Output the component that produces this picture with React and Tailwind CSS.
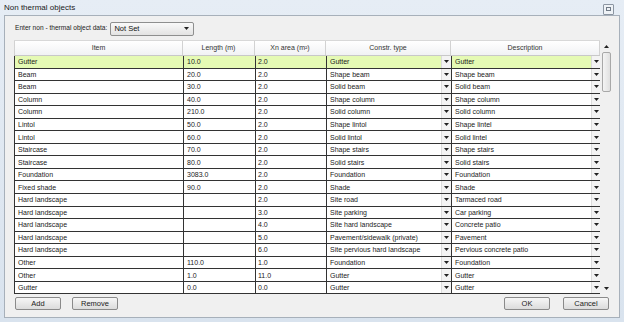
import React from "react";

const rows = [
  ["Gutter", "10.0", "2.0", "Gutter", "Gutter"],
  ["Beam", "20.0", "2.0", "Shape beam", "Shape beam"],
  ["Beam", "30.0", "2.0", "Solid beam", "Solid beam"],
  ["Column", "40.0", "2.0", "Shape column", "Shape column"],
  ["Column", "210.0", "2.0", "Solid column", "Solid column"],
  ["Lintol", "50.0", "2.0", "Shape lintol", "Shape lintel"],
  ["Lintol", "60.0", "2.0", "Solid lintol", "Solid lintel"],
  ["Staircase", "70.0", "2.0", "Shape stairs", "Shape stairs"],
  ["Staircase", "80.0", "2.0", "Solid stairs", "Solid stairs"],
  ["Foundation", "3083.0", "2.0", "Foundation", "Foundation"],
  ["Fixed shade", "90.0", "2.0", "Shade", "Shade"],
  ["Hard landscape", "", "2.0", "Site road", "Tarmaced road"],
  ["Hard landscape", "", "3.0", "Site parking", "Car parking"],
  ["Hard landscape", "", "4.0", "Site hard landscape", "Concrete patio"],
  ["Hard landscape", "", "5.0", "Pavement/sidewalk (private)", "Pavement"],
  ["Hard landscape", "", "6.0", "Site pervious hard landscape", "Pervious concrete patio"],
  ["Other", "110.0", "1.0", "Foundation", "Foundation"],
  ["Other", "1.0", "11.0", "Gutter", "Gutter"],
  ["Gutter", "0.0", "0.0", "Gutter", "Gutter"],
];

function Tri({ up }) {
  return (
    <svg width="5" height="3" viewBox="0 0 5 3" className="block">
      {up ? <path d="M0 3 L5 3 L2.5 0 Z" fill="#222" /> : <path d="M0 0 L5 0 L2.5 3 Z" fill="#222" />}
    </svg>
  );
}

function Btn({ children, w }) {
  return (
    <div
      className={`${w} h-[13px] flex items-center justify-center rounded-[2px] border border-[#8a8a8a] bg-gradient-to-b from-[#f6f6f6] to-[#dcdcdc] text-[7.5px] text-[#222]`}
    >
      {children}
    </div>
  );
}

export default function App() {
  return (
    <div
      className="w-[624px] h-[322px] overflow-hidden flex flex-col bg-gradient-to-b from-[#e6edf5] to-[#d9e3ee] text-[#111]"
      style={{ fontFamily: '"Liberation Sans", Arial, sans-serif' }}
    >
      {/* title bar */}
      <div className="h-[15px] shrink-0 flex items-center justify-between pl-[4px] pr-[10px]">
        <span className="text-[8px] leading-none text-[#1a1a1a]">Non thermal objects</span>
        <div className="w-[11px] h-[11px] mt-[3px] border border-[#8c96a2] rounded-[1px] bg-[#eef2f6] flex items-center justify-center">
          <div className="w-[5px] h-[4px] border border-[#707a86]" />
        </div>
      </div>

      {/* content */}
      <div className="mx-[4px] mb-[4px] flex-1 flex flex-col bg-[#f0f0f0] border border-[#a7b0ba] pl-[9px] pr-[6px]">
        {/* top row */}
        <div className="h-[24px] shrink-0 flex items-center gap-[3px] pl-[1px]">
          <span className="text-[6.6px] text-[#222]">Enter non - thermal object data:</span>
          <div className="w-[84px] h-[14px] mt-[1px] flex items-center justify-between border border-[#8e8f8f] rounded-[2px] bg-gradient-to-b from-[#f9f9f9] to-[#e3e3e3] pl-[3px] pr-[4px]">
            <span className="text-[7.5px]">Not Set</span>
            <Tri />
          </div>
        </div>

        {/* table + scrollbar */}
        <div className="flex shrink-0">
          <div className="w-[586px] flex flex-col">
            {/* header */}
            <div className="grid grid-cols-[169px_72px_71px_125px_149px] h-[16px] bg-gradient-to-b from-[#ffffff] to-[#f1f2f4] border-t border-[#d8d8d8] border-b border-b-[#c8c8c8]">
              {["Item", "Length (m)", "Xn area (m²)", "Constr. type", "Description"].map((h, i) => (
                <div
                  key={i}
                  className={`flex items-center justify-center text-[7px] text-[#333] border-r border-[#d2d2d2] ${i === 0 ? "border-l" : ""}`}
                >
                  {h}
                </div>
              ))}
            </div>
            {/* rows */}
            <div className="border-l border-[#333]">
              {rows.map((r, idx) => {
                const sel = idx === 0;
                const bg = sel ? "bg-[#e5fab4]" : "bg-white";
                return (
                  <div
                    key={idx}
                    className="grid grid-cols-[169px_72px_71px_125px_149px] h-[12.55px] border-b border-[#333] text-[7px] leading-none text-[#1a1a1a]"
                  >
                    <div className={`${bg} border-r border-[#333] flex items-center pl-[3px]`}>{r[0]}</div>
                    <div className={`${bg} border-r border-[#333] flex items-center pl-[3px]`}>{r[1]}</div>
                    <div className={`${bg} border-r border-[#333] flex items-center pl-[2px]`}>{r[2]}</div>
                    <div className="border-r border-[#333] flex">
                      <div className={`${bg} flex-1 flex items-center pl-[3px] whitespace-nowrap overflow-hidden`}>{r[3]}</div>
                      <div className="w-[10px] bg-[#f3f3f3] border-l border-[#dcdcdc] flex items-center justify-center">
                        <Tri />
                      </div>
                    </div>
                    <div className="border-r border-[#333] flex">
                      <div className={`${bg} flex-1 flex items-center pl-[3px] whitespace-nowrap overflow-hidden`}>{r[4]}</div>
                      <div className="w-[9px] bg-[#f3f3f3] border-l border-[#dcdcdc] flex items-center justify-center">
                        <Tri />
                      </div>
                    </div>
                  </div>
                );
              })}
            </div>
          </div>
          {/* scrollbar */}
          <div className="w-[13px] flex flex-col bg-[#f0f0f0]">
            <div className="h-[12px] flex items-center justify-center">
              <Tri up />
            </div>
            <div className="mx-[2px] h-[40px] rounded-[2px] border border-[#a8a8a8] bg-gradient-to-r from-[#f4f4f4] to-[#e0e0e0]" />
            <div className="flex-1" />
            <div className="h-[12px] flex items-center justify-center">
              <Tri />
            </div>
          </div>
        </div>

        {/* buttons */}
        <div className="flex items-center h-[17px] pt-[1px] pl-[1px] pr-[4px]">
          <Btn w="w-[46px]">Add</Btn>
          <div className="w-[11px]" />
          <Btn w="w-[46px]">Remove</Btn>
          <div className="flex-1" />
          <Btn w="w-[46px]">OK</Btn>
          <div className="w-[13px]" />
          <Btn w="w-[46px]">Cancel</Btn>
        </div>
      </div>
    </div>
  );
}
